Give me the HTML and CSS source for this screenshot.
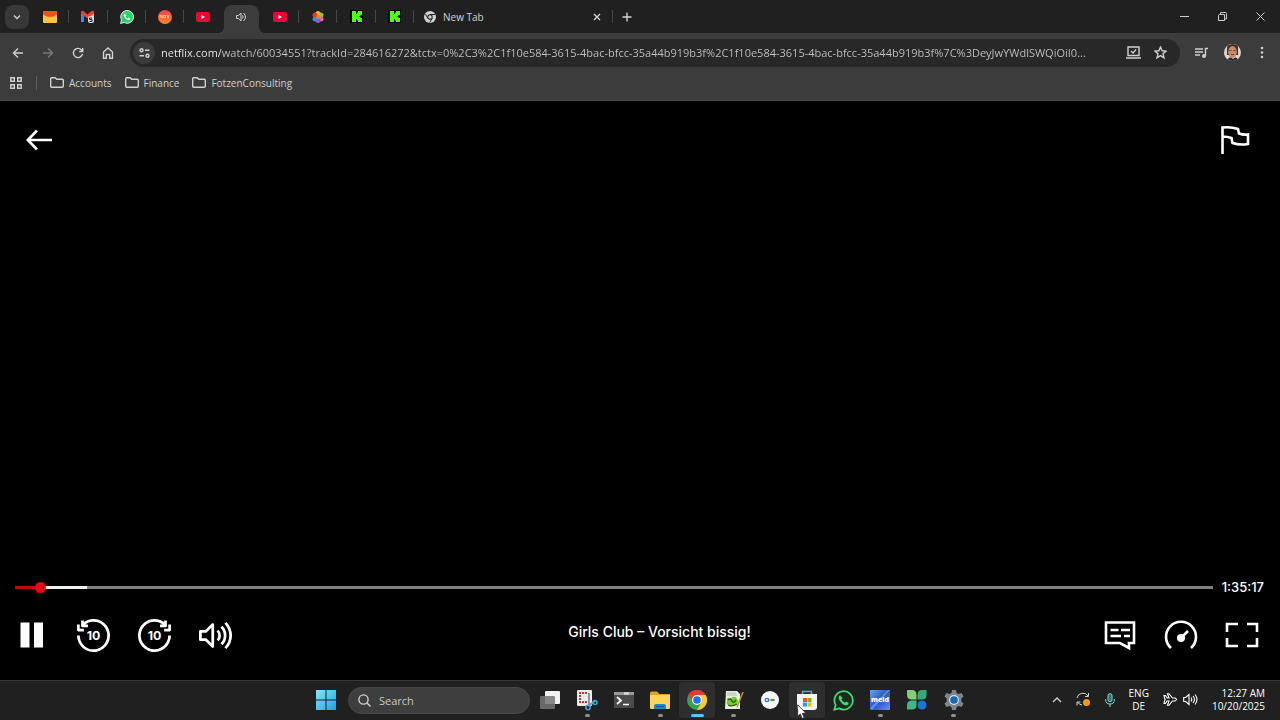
FILE: index.html
```html
<!DOCTYPE html>
<html lang="en">
<head>
	<meta charset="UTF-8">
	<meta name="viewport" content="width=device-width, initial-scale=1.0">
	<title>Girls Club – Vorsicht bissig!</title>
	<link rel="stylesheet" href="styles.css">
</head>
<body>
	<header class="browser">
		<div class="tabstrip">
			<button class="tab-search" aria-label="Search tabs"><svg width="10" height="10" viewBox="0 0 10 10"><path class="line" d="M2 3.500l3 3 3-3"/></svg></button>
			<div class="tabs">
				<button class="tab" aria-label="Mail"><svg width="14" height="12" viewBox="0 0 14 12"><rect width="14" height="12" rx="1" fill="#ffc63d"/><path d="M0 1q0-1 1-1h12q1 0 1 1v2.500q-7 5-14 0z" fill="#f4511e"/></svg></button>
				<button class="tab" aria-label="Gmail"><svg width="16" height="14" viewBox="0 0 16 14"><path d="M1 2v10h3V5z" fill="#4285f4"/><path d="M11 5v5h3V2z" fill="#fbbc04"/><path d="M1 3.500V1.500q2-1.500 3 0L7.500 4.500 11 1.500q2-1.500 3 0v2L7.500 8.500z" fill="#ea4335"/><rect x="8" y="6" width="6" height="7" rx="2" fill="#ddd"/><path d="M12 8H9.500v1.500H12V11.500H9.500" fill="none" stroke="#222"/></svg></button>
				<button class="tab" aria-label="WhatsApp"><svg width="14" height="14" viewBox="0 0 24 24"><path d="M1 23l1.500-6A11 11 0 1 1 7 21.500z" fill="#25d366" stroke="#fff" stroke-width="1.500"/><path d="M8 6c-3 2-1 6 2 9s7 3.500 8 0l-3-2-1.500 1.500q-3-1-4-4L11 9z" fill="#fff"/></svg></button>
				<button class="tab" aria-label="Show"><svg width="14" height="14" viewBox="0 0 14 14"><defs><linearGradient id="sun" x2="0" y2="1"><stop stop-color="#f33c56"/><stop offset="1" stop-color="#ff8b1d"/></linearGradient></defs><circle cx="7" cy="7" r="7" fill="url(#sun)"/><path d="M2 8V5l2 3V5M5.500 5.500v2h2v-2zM9 5l1 3 1-3" fill="none" stroke="#ffd2a0" stroke-width=".8"/></svg></button>
				<button class="tab" aria-label="YouTube"><svg width="14" height="10" viewBox="0 0 14 10"><rect width="14" height="10" rx="2" fill="#f00034"/><path d="M5.500 3v4L9 5z" fill="#fff"/></svg></button>
				<button class="tab active" aria-label="Netflix"><svg width="11" height="10" viewBox="0 0 11 10"><path class="line thin" d="M.5 3.500h2L5 1v8L2.500 6.500h-2zM6.500 3.500q1.500 1.500 0 3M7.500 1q4 4 0 8"/></svg></button>
				<button class="tab" aria-label="YouTube"><svg width="14" height="10" viewBox="0 0 14 10"><rect width="14" height="10" rx="2" fill="#f00034"/><path d="M5.500 3v4L9 5z" fill="#fff"/></svg></button>
				<button class="tab" aria-label="Colours"><svg width="14" height="14" viewBox="0 0 14 14"><circle cx="7" cy="3.500" r="2.500" fill="#e8b92d"/><circle cx="10" cy="5" r="2.500" fill="#8ec63f"/><circle cx="10" cy="9" r="2.500" fill="#e46aa0"/><circle cx="7" cy="10.500" r="2.500" fill="#a54fc5"/><circle cx="4" cy="9" r="2.500" fill="#3a8ee0"/><circle cx="4" cy="5" r="2.500" fill="#e53935"/><circle cx="7" cy="7" r="2" fill="#e8803a"/></svg></button>
				<button class="tab" aria-label="Kick"><svg width="13" height="13" viewBox="0 0 13 13"><path d="M0 0h13v13H0z"/><path d="M2 1h4v3h1V2.500h1V1h4v4h-1.500v1H9.500v1h1v1H12v4H8v-1.500H7V9H6v3H2z" fill="#53fc18"/></svg></button>
				<button class="tab" aria-label="Kick"><svg width="13" height="13" viewBox="0 0 13 13"><path d="M0 0h13v13H0z"/><path d="M2 1h4v3h1V2.500h1V1h4v4h-1.500v1H9.500v1h1v1H12v4H8v-1.500H7V9H6v3H2z" fill="#53fc18"/></svg></button>
			</div>
			<div class="tab-wide">
				<svg width="12" height="12" viewBox="0 0 12 12"><circle cx="6" cy="6" r="6" fill="#d0d0d0"/><path d="M6 3.500h5M3.800 7.200L1.500 3.200M8.200 7.200L5.700 11.500" stroke="#202020"/><circle cx="6" cy="6" r="2.700" fill="#202020"/><circle cx="6" cy="6" r="1.700" fill="#d0d0d0"/></svg>
				<span>New Tab</span>
				<button class="icon-btn" aria-label="Close tab"><svg width="8" height="8" viewBox="0 0 8 8"><path class="line" d="M1 1l6 6M7 1L1 7"/></svg></button>
			</div>
			<button class="icon-btn new-tab" aria-label="New tab"><svg width="10" height="10" viewBox="0 0 10 10"><path class="line" d="M5 .5v9M.5 5h9"/></svg></button>
			<div class="window-controls">
				<button class="icon-btn" aria-label="Minimize"><svg width="9" height="9" viewBox="0 0 9 9"><path class="line thin" d="M0 4.500h9"/></svg></button>
				<button class="icon-btn" aria-label="Restore"><svg width="9" height="9" viewBox="0 0 9 9"><path class="line thin" d="M1.500 2.500h5v6h-6v-5q0-1 1-1M2.500 2V.5h5q1 0 1 1v5.500H7"/></svg></button>
				<button class="icon-btn" aria-label="Close"><svg width="9" height="9" viewBox="0 0 9 9"><path class="line thin" d="M.5.500l8 8M8.500.500l-8 8"/></svg></button>
			</div>
		</div>

		<div class="toolbar">
			<button class="icon-btn" aria-label="Back"><svg width="12" height="12" viewBox="0 0 12 12"><path class="line" d="M11 6H1.500M6 1.500L1.500 6 6 10.500"/></svg></button>
			<button class="icon-btn" aria-label="Forward" disabled><svg width="12" height="12" viewBox="0 0 12 12"><path class="line" d="M1 6h9.500M6 1.500L10.500 6 6 10.500"/></svg></button>
			<button class="icon-btn" aria-label="Reload"><svg width="12" height="12" viewBox="0 0 12 12"><path class="line" d="M10.500 7A4.600 4.600 0 1 1 9.500 3L10.500 4.300M10.700 1v3.500H7.200"/></svg></button>
			<button class="icon-btn" aria-label="Home"><svg width="12" height="12" viewBox="0 0 12 12"><path class="line" d="M1.500 5L6 1l4.500 4v6.300H7.700V7.500H4.300v3.800H1.500z"/></svg></button>
			<div class="address">
				<button class="site-info" aria-label="Site information"><svg width="11" height="10" viewBox="0 0 11 10"><g class="line"><circle cx="2.500" cy="2.200" r="1.500"/><path d="M6 2.200h4.500M.5 7.800H5"/><circle cx="8.500" cy="7.800" r="1.500"/></g></svg></button>
				<input class="url" type="text" aria-label="Address" value="netflix.com/watch/60034551?trackId=284616272&amp;tctx=0%2C3%2C1f10e584-3615-4bac-bfcc-35a44b919b3f%2C1f10e584-3615-4bac-bfcc-35a44b919b3f%7C%3DeyJwYWdlSWQiOiI0...">
				<button class="icon-btn" aria-label="Install"><svg width="15" height="13" viewBox="0 0 15 13"><path class="line" d="M2 1h11v8.500H2zM0 12h15M5 5l2 2 3-3.500"/></svg></button>
				<button class="icon-btn" aria-label="Bookmark"><svg width="13" height="13" viewBox="0 0 13 13"><path class="line" d="M6.500 1l1.600 3.800 4 .3L9 7.800l1 4-3.500-2.200L3 11.800l1-4L.9 5.100l4-.3z"/></svg></button>
			</div>
			<button class="icon-btn media" aria-label="Media controls"><svg width="14" height="12" viewBox="0 0 14 12"><path class="line" d="M0 2h8M0 5h8M0 8h5M10.500 9V1.500H13"/><circle cx="9" cy="9" r="2" fill="#d0d0d0"/></svg></button>
			<button class="icon-btn" aria-label="Profile"><svg width="17" height="17" viewBox="0 0 17 17"><defs><clipPath id="face"><circle cx="8.500" cy="8.500" r="8.500"/></clipPath></defs><g clip-path="url(#face)"><path d="M0 0h17v17H0z" fill="#d9d6d2"/><path d="M3 4q0-4 6-4t5 5v6H3z" fill="#4a2b20"/><ellipse cx="8.500" cy="8" rx="4.300" ry="6" fill="#c98a6d"/><path d="M3 17q1-4 4-3.500l2 1.500 2-1.500q3 0 3 3.500z" fill="#262a33"/><path d="M5.500 6.500h2M9.500 6.500h2M7 10.500h3" stroke="#69402f" fill="none"/></g></svg></button>
			<button class="icon-btn" aria-label="Menu"><svg width="4" height="13" viewBox="0 0 4 13"><g fill="#d0d0d0"><circle cx="2" cy="2" r="1.300"/><circle cx="2" cy="6.500" r="1.300"/><circle cx="2" cy="11" r="1.300"/></g></svg></button>
		</div>

		<nav class="bookmarks">
			<button class="icon-btn apps" aria-label="Apps"><svg width="12" height="12" viewBox="0 0 12 12"><path class="line" d="M.8.800h3.500v3.500H.8zM7.700.800h3.500v3.500H7.700zM.8 7.700h3.500v3.500H.8zM7.700 7.700h3.500v3.500H7.700z"/></svg></button>
			<a href="#"><svg width="14" height="11" viewBox="0 0 14 11"><path class="line" d="M.7 1.700q0-1 1-1h3.500l1.500 1.500h5.600q1 0 1 1v6q0 1-1 1H1.700q-1 0-1-1z"/></svg>Accounts</a>
			<a href="#"><svg width="14" height="11" viewBox="0 0 14 11"><path class="line" d="M.7 1.700q0-1 1-1h3.500l1.500 1.500h5.600q1 0 1 1v6q0 1-1 1H1.700q-1 0-1-1z"/></svg>Finance</a>
			<a href="#"><svg width="14" height="11" viewBox="0 0 14 11"><path class="line" d="M.7 1.700q0-1 1-1h3.500l1.500 1.500h5.600q1 0 1 1v6q0 1-1 1H1.700q-1 0-1-1z"/></svg>FotzenConsulting</a>
		</nav>
	</header>

	<main class="player">
		<div class="player-top">
			<button aria-label="Back to browse"><svg width="26" height="22" viewBox="0 0 26 22"><path class="bold" d="M26 11H2M11 1.500L1.800 11 11 20.500"/></svg></button>
			<button aria-label="Report a problem"><svg width="30" height="30" viewBox="0 0 30 30"><path class="bold" d="M2.500 29V2.500Q11 1.500 18 4l1 4.500q4 1.500 9 1v9.500q-8 1.500-15.500-1L11.500 13q-4-1.500-9-1.500"/></svg></button>
		</div>
		<div class="seek-row">
			<input class="seek" type="range" min="0" max="1000" value="17" aria-label="Seek">
			<time>1:35:17</time>
		</div>
		<div class="controls">
			<button aria-label="Pause"><svg width="34" height="34" viewBox="0 0 34 34"><path d="M5.500 4.500h9v25h-9zM19 4.500h9v25h-9z" fill="#fff"/></svg></button>
			<button aria-label="Back 10 seconds"><svg width="33" height="33" viewBox="0 0 24 24"><path fill="#fff" d="M11.020 2.050A10 10 0 1 1 2 12H0a12 12 0 1 0 5-9.750V1H3v4a1 1 0 0 0 1 1h4V4H6a10 10 0 0 1 5.020-1.950M2 4v3h3v2H1a1 1 0 0 1-1-1V4z"/><text x="12" y="15.400">10</text></svg></button>
			<button aria-label="Forward 10 seconds"><svg width="33" height="33" viewBox="0 0 24 24"><path fill="#fff" d="M6.440 3.690A10 10 0 0 1 18 4h-2v2h4a1 1 0 0 0 1-1V1h-2v1.250A12 12 0 1 0 24 12h-2A10 10 0 1 1 6.440 3.690M22 4v3h-3v2h4a1 1 0 0 0 1-1V4z"/><text x="12" y="15.400">10</text></svg></button>
			<button aria-label="Volume"><svg width="33" height="33" viewBox="0 0 24 24"><path fill="#fff" fill-rule="evenodd" d="M24 12a14 14 0 0 0-4.100-9.900l-1.410 1.410a12 12 0 0 1 0 16.980L19.900 21.900A14 14 0 0 0 24 12M11 4a1 1 0 0 0-1.700-.7L4.590 8H1a1 1 0 0 0-1 1v6a1 1 0 0 0 1 1h3.590l4.700 4.700A1 1 0 0 0 11 20zM5.700 9.700L9 6.410v11.180L5.700 14.300 5.410 14H2v-4h3.410zM16 12a6 6 0 0 0-1.760-4.240l-1.410 1.410a4 4 0 0 1 0 5.660l1.410 1.410A6 6 0 0 0 16 12M17.070 4.930a10 10 0 0 1 0 14.140l-1.410-1.410a8 8 0 0 0 0-11.320z"/></svg></button>
			<h1>Girls Club – Vorsicht bissig!</h1>
			<button aria-label="Audio and subtitles"><svg width="34" height="34" viewBox="0 0 34 34"><path class="bold" d="M3 4.500h28v20.500h-5v5L17 25H3z"/><path class="bold" d="M7.500 12h8M18 12h9M7.500 18h10.500M21 18h6"/></svg></button>
			<button aria-label="Playback speed"><svg width="34" height="34" viewBox="0 0 34 34"><path class="bold" d="M7 30A15 15 0 1 1 27 30M17 20l7-7"/><circle cx="17" cy="20" r="4" fill="#fff"/></svg></button>
			<button aria-label="Full screen"><svg width="34" height="34" viewBox="0 0 34 34"><path class="bold" d="M2 14V6h11M22 6h10v8M32 20v8H22M13 28H2v-8"/></svg></button>
		</div>
	</main>

	<footer class="taskbar">
		<div class="dock">
			<button class="start" aria-label="Start"><svg width="20" height="20" viewBox="0 0 20 20"><defs><linearGradient id="win" x2="1" y2="1"><stop stop-color="#8be1fb"/><stop offset="1" stop-color="#18a4ee"/></linearGradient></defs><path d="M0 0h9.500v9.500H0zM10.500 0H20v9.500h-9.500zM0 10.500h9.500V20H0zM10.500 10.500H20V20h-9.500z" fill="url(#win)"/></svg></button>
			<label class="search"><svg width="13" height="13" viewBox="0 0 13 13"><circle class="line" cx="5.500" cy="5.500" r="4.600"/><path class="line" d="M9 9l3.500 3.500"/></svg><input type="text" placeholder="Search"></label>
			<div class="apps-row">
				<button aria-label="Task view"><svg width="22" height="20" viewBox="0 0 22 20"><rect x="6" y="1" width="15" height="13" rx="1" fill="#f2f2f2"/><rect x="1" y="6" width="15" height="13" rx="1" fill="#777" fill-opacity=".85"/></svg></button>
				<button class="open" aria-label="Snipping Tool"><svg width="22" height="22" viewBox="0 0 22 22"><rect x="1" y="1" width="15" height="16" rx="1" fill="#ecebea"/><path d="M3 4h9M4 6v8M6 13h5" stroke="#d13438" stroke-width="2" stroke-dasharray="2 1"/><path d="M13 4v12M12 17l7-5" stroke="#8d9499" stroke-width="2"/><g fill="none" stroke="#3ba4d8" stroke-width="1.600"><circle cx="12" cy="18.500" r="2.200"/><circle cx="19" cy="13.500" r="2"/></g></svg></button>
				<button aria-label="Terminal"><svg width="20" height="16" viewBox="0 0 20 16"><rect width="20" height="16" rx="1" fill="#4b4b4b"/><path d="M0 0h20v3H0z" fill="#999"/><path d="M10 0h5v3h-5z" fill="#ccc"/><path d="M3 5l4 3.500L3 12M9 12.500h6" fill="none" stroke="#fff" stroke-width="1.700"/></svg></button>
				<button class="open" aria-label="File Explorer"><svg width="20" height="19" viewBox="0 0 20 19"><path d="M0 2q0-1.500 1.500-1.500H7L9.500 3H20v7H0z" fill="#dfa12a"/><rect y="4" width="20" height="14" rx="1" fill="#ffd45a"/><path d="M4 18v-3q0-2 2-2h8q2 0 2 2v3z" fill="#1787d0"/><path d="M6 15h8v1H6z" fill="#0c5a98"/></svg></button>
				<button class="open current" aria-label="Chrome"><svg width="20" height="20" viewBox="0 0 20 20"><circle cx="10" cy="10" r="10" fill="#31a351"/><path d="M1.300 5A10 10 0 0 1 18.700 5H10L5.700 12.500z" fill="#e33b2e"/><path d="M18.700 5A10 10 0 0 1 10 20l4.300-7.500L10 5z" fill="#fcc934"/><circle cx="10" cy="10" r="5" fill="#fff"/><circle cx="10" cy="10" r="3.800" fill="#1a73e8"/></svg></button>
				<button class="open" aria-label="Notepad++"><svg width="20" height="20" viewBox="0 0 20 20"><path d="M2 1h11l3 3v15H1z" fill="#e9eee5"/><path d="M3 3h9M3 5h10" stroke="#b0b7aa"/><path d="M3 11q-1-4 4-3 5-3 6 1 2 2 0 5-5 4-9 1-2-1-1-4" fill="#6fd128"/><path d="M4 10q3-2 4 1t4-1M4 15q4 2 9-1" stroke="#2b5c19" fill="none" stroke-width="1.300"/><path d="M19 2l-6 15" stroke="#bf9140" stroke-width="1.500"/></svg></button>
				<button aria-label="Passwords"><svg width="18" height="18" viewBox="0 0 18 18"><circle cx="9" cy="9" r="9" fill="#f5f7fa"/><circle cx="6" cy="9" r="1.700" fill="none" stroke="#2877df" stroke-width="1.300"/><path d="M8 9h3" stroke="#e7a928" stroke-width="1.500"/><path d="M10 9h3.500" stroke="#399a51" stroke-width="2.200"/></svg></button>
				<button class="hovered" aria-label="Microsoft Store"><svg width="20" height="20" viewBox="0 0 20 20"><path d="M5.500 6V1.500h9V6" fill="none" stroke="#36b3ed" stroke-width="1.500"/><path d="M0 4h20v13q0 3-3 3H3q-3 0-3-3z" fill="#f3f4f5"/><path d="M6 8h4v4H6z" fill="#ef5228"/><path d="M10.500 8h4v4h-4z" fill="#7bb900"/><path d="M6 12.500h4v4H6z" fill="#20a3e6"/><path d="M10.500 12.500h4v4h-4z" fill="#fdb900"/></svg></button>
				<button aria-label="WhatsApp"><svg width="21" height="21" viewBox="0 0 24 24"><path d="M1.500 22.500L3 17A10.500 10.500 0 1 1 7 21z" fill="#1c2a20" stroke="#3fdc75" stroke-width="2"/><path d="M8 6c-3 2-1 6 2 9s7 3.500 8 0l-3-2-1.500 1.500q-3-1-4-4L11 9z" fill="#3fdc75"/></svg></button>
				<button class="open" aria-label="meld"><svg width="20" height="20" viewBox="0 0 20 20"><defs><linearGradient id="meld" x2="1" y2="1"><stop stop-color="#69a7ef"/><stop offset=".5" stop-color="#2854c4"/><stop offset="1" stop-color="#718ded"/></linearGradient></defs><path d="M0 0h20v20H0z" fill="url(#meld)"/><path d="M0 18L18 0h2L2 20z" fill="#94c7f5" opacity=".5"/><text class="meld" x="10" y="12">meld</text></svg></button>
				<button aria-label="Clover"><svg width="20" height="20" viewBox="0 0 20 20"><path d="M0 0h5q4.500 0 4.500 5v4.500H5Q0 9.500 0 5z" fill="#83cf78"/><path d="M19.500 0h-4.500q-4.500 0-4.500 5v4.500H15q4.500 0 4.500-4.500z" fill="#34ac76"/><path d="M0 19.500V15q0-4.500 5-4.500h4.500V15q0 4.500-4.500 4.500z" fill="#3db783"/><circle cx="15" cy="15" r="4.500" fill="#1678d3"/></svg></button>
				<button class="open" aria-label="Settings"><svg width="20" height="20" viewBox="0 0 20 20"><path d="M8 0h4l.6 3 2 1.100 3-1L19.500 6.500l-2.200 2v3l2.200 2-1.900 3.400-3-1-2 1.100L12 20H8l-.6-3-2-1.100-3 1L.5 13.500l2.200-2v-3l-2.200-2 1.900-3.400 3 1 2-1.100z" fill="#7e858b"/><circle cx="10" cy="10" r="5" fill="#d6e3ed"/><circle cx="10" cy="10" r="3.800" fill="#1768b3"/></svg></button>
			</div>
		</div>
		<div class="tray">
			<button aria-label="Hidden icons"><svg width="10" height="6" viewBox="0 0 10 6"><path class="line" d="M1 5l4-4 4 4"/></svg></button>
			<button aria-label="Updates"><svg width="15" height="15" viewBox="0 0 15 15"><path class="line thin" d="M1 6a6 6 0 0 1 11-2M12.500 1v3.500H9M6 13a6 6 0 0 1-4.500-3M1 13.500V10h3.500"/><circle cx="10.500" cy="10.500" r="3.500" fill="#f39c12"/></svg></button>
			<button aria-label="Microphone"><svg width="10" height="14" viewBox="0 0 10 14"><rect x="3" y=".7" width="4" height="8" rx="2" fill="#356b68" stroke="#8ad8d0"/><path d="M.7 6v1q0 4 4.300 4t4.300-4V6M5 11v3" fill="none" stroke="#8ad8d0"/></svg></button>
			<button class="lang">ENG<br>DE</button>
			<button class="quick" aria-label="Network and sound"><svg width="14" height="13" viewBox="0 0 14 13"><path class="line bright" d="M1 2.500h1.500l1.500 2.500h2L4.500.700H6L9.500 5H12q3 1.500 0 3H9.500L6 12.300H4.500L6 8H4l-1.500 2.500H1L2 6.500z"/></svg><svg width="15" height="13" viewBox="0 0 15 13"><path class="line bright" d="M.7 4.500h2L6 1.500v10l-3.300-3h-2zM8 4.500q1.500 2 0 4M10 3q3 3.500 0 7M12 1.500q4 5 0 10"/></svg></button>
			<button class="clock">12:27 AM<br>10/20/2025</button>
		</div>
	</footer>

	<svg class="cursor" width="11" height="16" viewBox="0 0 11 16"><path d="M.7.800v11.500l2.600-2.300 1.900 4.500 2-.9-1.900-4.300h3.700z" fill="#fff" stroke="#222" stroke-width=".8"/></svg>
</body>
</html>
```
FILE: styles.css
```css
*{
	box-sizing: border-box;
}
body{
	margin: 0;
	min-height: 100vh;
	display: flex;
	flex-flow: column;
	background: #000;
	font-family: "Open Sans", "Noto Sans", sans-serif;
	font-size: 10px;
	color: #d0d0d0;
}
button,input{
	margin: 0;
	padding: 0;
	border: none;
	background: none;
	font: inherit;
	color: inherit;
}
button{
	display: flex;
	flex: none;
	align-items: center;
	justify-content: center;
	cursor: pointer;
}
svg{
	display: block;
	flex: none;
}
.line{
	fill: none;
	stroke: #d0d0d0;
	stroke-width: 1.4;
}
.thin{
	stroke-width: 1;
}
.bright{
	stroke: #fff;
	stroke-width: 1.1;
}
.bold{
	fill: none;
	stroke: #fff;
	stroke-width: 2.6;
}

/* browser */
.browser{
	background: #3c3c3c;
	border-bottom: 1px solid #4a4a4a;
}
.tabstrip{
	display: flex;
	align-items: center;
	height: 33px;
	padding-left: 5px;
	background: #202020;
}
.tab-search{
	width: 24px;
	height: 24px;
	margin-right: 2px;
	border-radius: 8px;
	background: #383838;
}
.tabs{
	display: flex;
	width: 383px;
	height: 33px;
}
.tab{
	position: relative;
	flex: 1;
}
.tab svg{
	position: relative;
}
.tab::after,.tab-wide::after{
	content: "";
	position: absolute;
	right: 0;
	top: 10px;
	width: 1px;
	height: 13px;
	background: #484848;
}
.tab.active::before{
	content: "";
	position: absolute;
	inset: 5px 2px 0;
	border-radius: 8px 8px 0 0;
	background: #3c3c3c;
}
/* flared feet of the active tab */
.tab.active::after{
	inset: auto -4px 0;
	width: auto;
	height: 6px;
	background:
		radial-gradient(circle at 0 0, transparent 6px, #3c3c3c 6px) left / 6px 6px no-repeat,
		radial-gradient(circle at 100% 0, transparent 6px, #3c3c3c 6px) right / 6px 6px no-repeat;
}
.tab:has(+ .active)::after{
	display: none;
}
.tab-wide{
	position: relative;
	display: flex;
	align-items: center;
	gap: 7px;
	width: 199px;
	height: 33px;
	padding: 0 8px 0 10px;
}
.tab-wide span{
	flex: 1;
}
.icon-btn{
	width: 16px;
	height: 24px;
}
.icon-btn:disabled{
	opacity: .4;
}
.new-tab{
	margin-left: 6px;
}
.window-controls{
	display: flex;
	gap: 22px;
	margin-left: auto;
	padding-right: 12px;
}
.toolbar{
	display: flex;
	align-items: center;
	gap: 14px;
	height: 39px;
	padding: 0 10px;
}
.address{
	display: flex;
	flex: 1;
	align-items: center;
	gap: 11px;
	height: 28px;
	padding: 0 12px 0 3px;
	border-radius: 14px;
	background: #282828;
}
.site-info{
	width: 22px;
	height: 22px;
	border-radius: 50%;
	background: #3c3c3c;
}
.url{
	flex: 1;
	min-width: 0;
	margin-left: -5px;
	font-size: 11px;
	background: linear-gradient(90deg, #f0f0f0 60px, #c4c4c4 60px);
	-webkit-background-clip: text;
	background-clip: text;
	color: transparent;
}
.bookmarks{
	display: flex;
	align-items: center;
	gap: 13px;
	height: 28px;
	padding: 0 8px 7px;
}
.apps{
	width: 29px;
	height: 14px;
	padding-right: 13px;
	border-right: 1px solid #5c5c5c;
}
.bookmarks a{
	display: flex;
	align-items: center;
	gap: 5px;
	color: inherit;
	text-decoration: none;
}

/* player */
.player{
	display: flex;
	flex: 1;
	flex-flow: column;
	font-family: Inter, "Liberation Sans", sans-serif;
	color: #fff;
}
.player-top{
	display: flex;
	align-items: center;
	justify-content: space-between;
	padding: 24px 30px 0 26px;
	margin-bottom: auto;
}
.seek-row{
	display: flex;
	align-items: center;
	gap: 9px;
	padding: 0 16px 0 15px;
	font-size: 13px;
	font-weight: 500;
	line-height: 16px;
}
.seek{
	-webkit-appearance: none;
	appearance: none;
	flex: 1;
	height: 12px;
}
.seek::-webkit-slider-runnable-track{
	height: 3px;
	background: linear-gradient(90deg, #c1070f 25px, #f0f0f0 25px, #f0f0f0 72px, #808080 72px);
}
.seek::-webkit-slider-thumb{
	-webkit-appearance: none;
	width: 11px;
	height: 11px;
	margin-top: -4px;
	border-radius: 50%;
	background: #e50914;
}
.controls{
	display: flex;
	align-items: center;
	gap: 27px;
	padding: 23px 21px 28px 15px;
}
.controls button{
	width: 34px;
	height: 34px;
}
.controls h1{
	flex: 1;
	margin: 0 16px 6px 0;
	font-size: 14px;
	font-weight: 500;
	line-height: 18px;
	text-align: center;
}
.controls text{
	fill: #fff;
	font-size: 9px;
	font-weight: 700;
	text-anchor: middle;
}

/* taskbar */
.taskbar{
	display: grid;
	grid-template-columns: 1fr auto 1fr;
	height: 40px;
	border-top: 1px solid #3a3a3a;
	background: #202020;
}
.dock{
	display: flex;
	grid-column: 2;
	align-items: center;
	margin-right: 4px;
	padding-bottom: 1px;
}
.start{
	width: 44px;
	height: 38px;
}
.search{
	display: flex;
	align-items: center;
	gap: 8px;
	width: 182px;
	height: 27px;
	margin-right: 2px;
	padding: 0 9px;
	border: 1px solid #484848;
	border-radius: 14px;
	background: #3e3e3e;
}
.search input{
	flex: 1;
	min-width: 0;
	font-size: 11px;
}
.search input::placeholder{
	color: #c8c8c8;
}
.apps-row{
	display: flex;
	width: 440px;
	height: 36px;
}
.apps-row button{
	position: relative;
	flex: 1;
	border-radius: 4px;
}
.apps-row .current,.apps-row .hovered{
	background: #2e2e2e;
}
.apps-row .open::after{
	content: "";
	position: absolute;
	bottom: 1px;
	width: 5px;
	height: 3px;
	border-radius: 2px;
	background: #8f8f8f;
}
.apps-row .current::after{
	width: 13px;
	background: #5fc3f0;
}
.meld{
	fill: #fff;
	font-size: 7px;
	font-weight: 800;
	text-anchor: middle;
}
.tray{
	display: flex;
	align-items: center;
	justify-content: flex-end;
	gap: 14px;
	padding: 0 15px 2px 0;
	line-height: 13px;
	color: #fff;
}
.quick{
	gap: 6px;
}
.clock{
	text-align: right;
}
.cursor{
	position: absolute;
	left: 797px;
	top: 704px;
	pointer-events: none;
}
```
